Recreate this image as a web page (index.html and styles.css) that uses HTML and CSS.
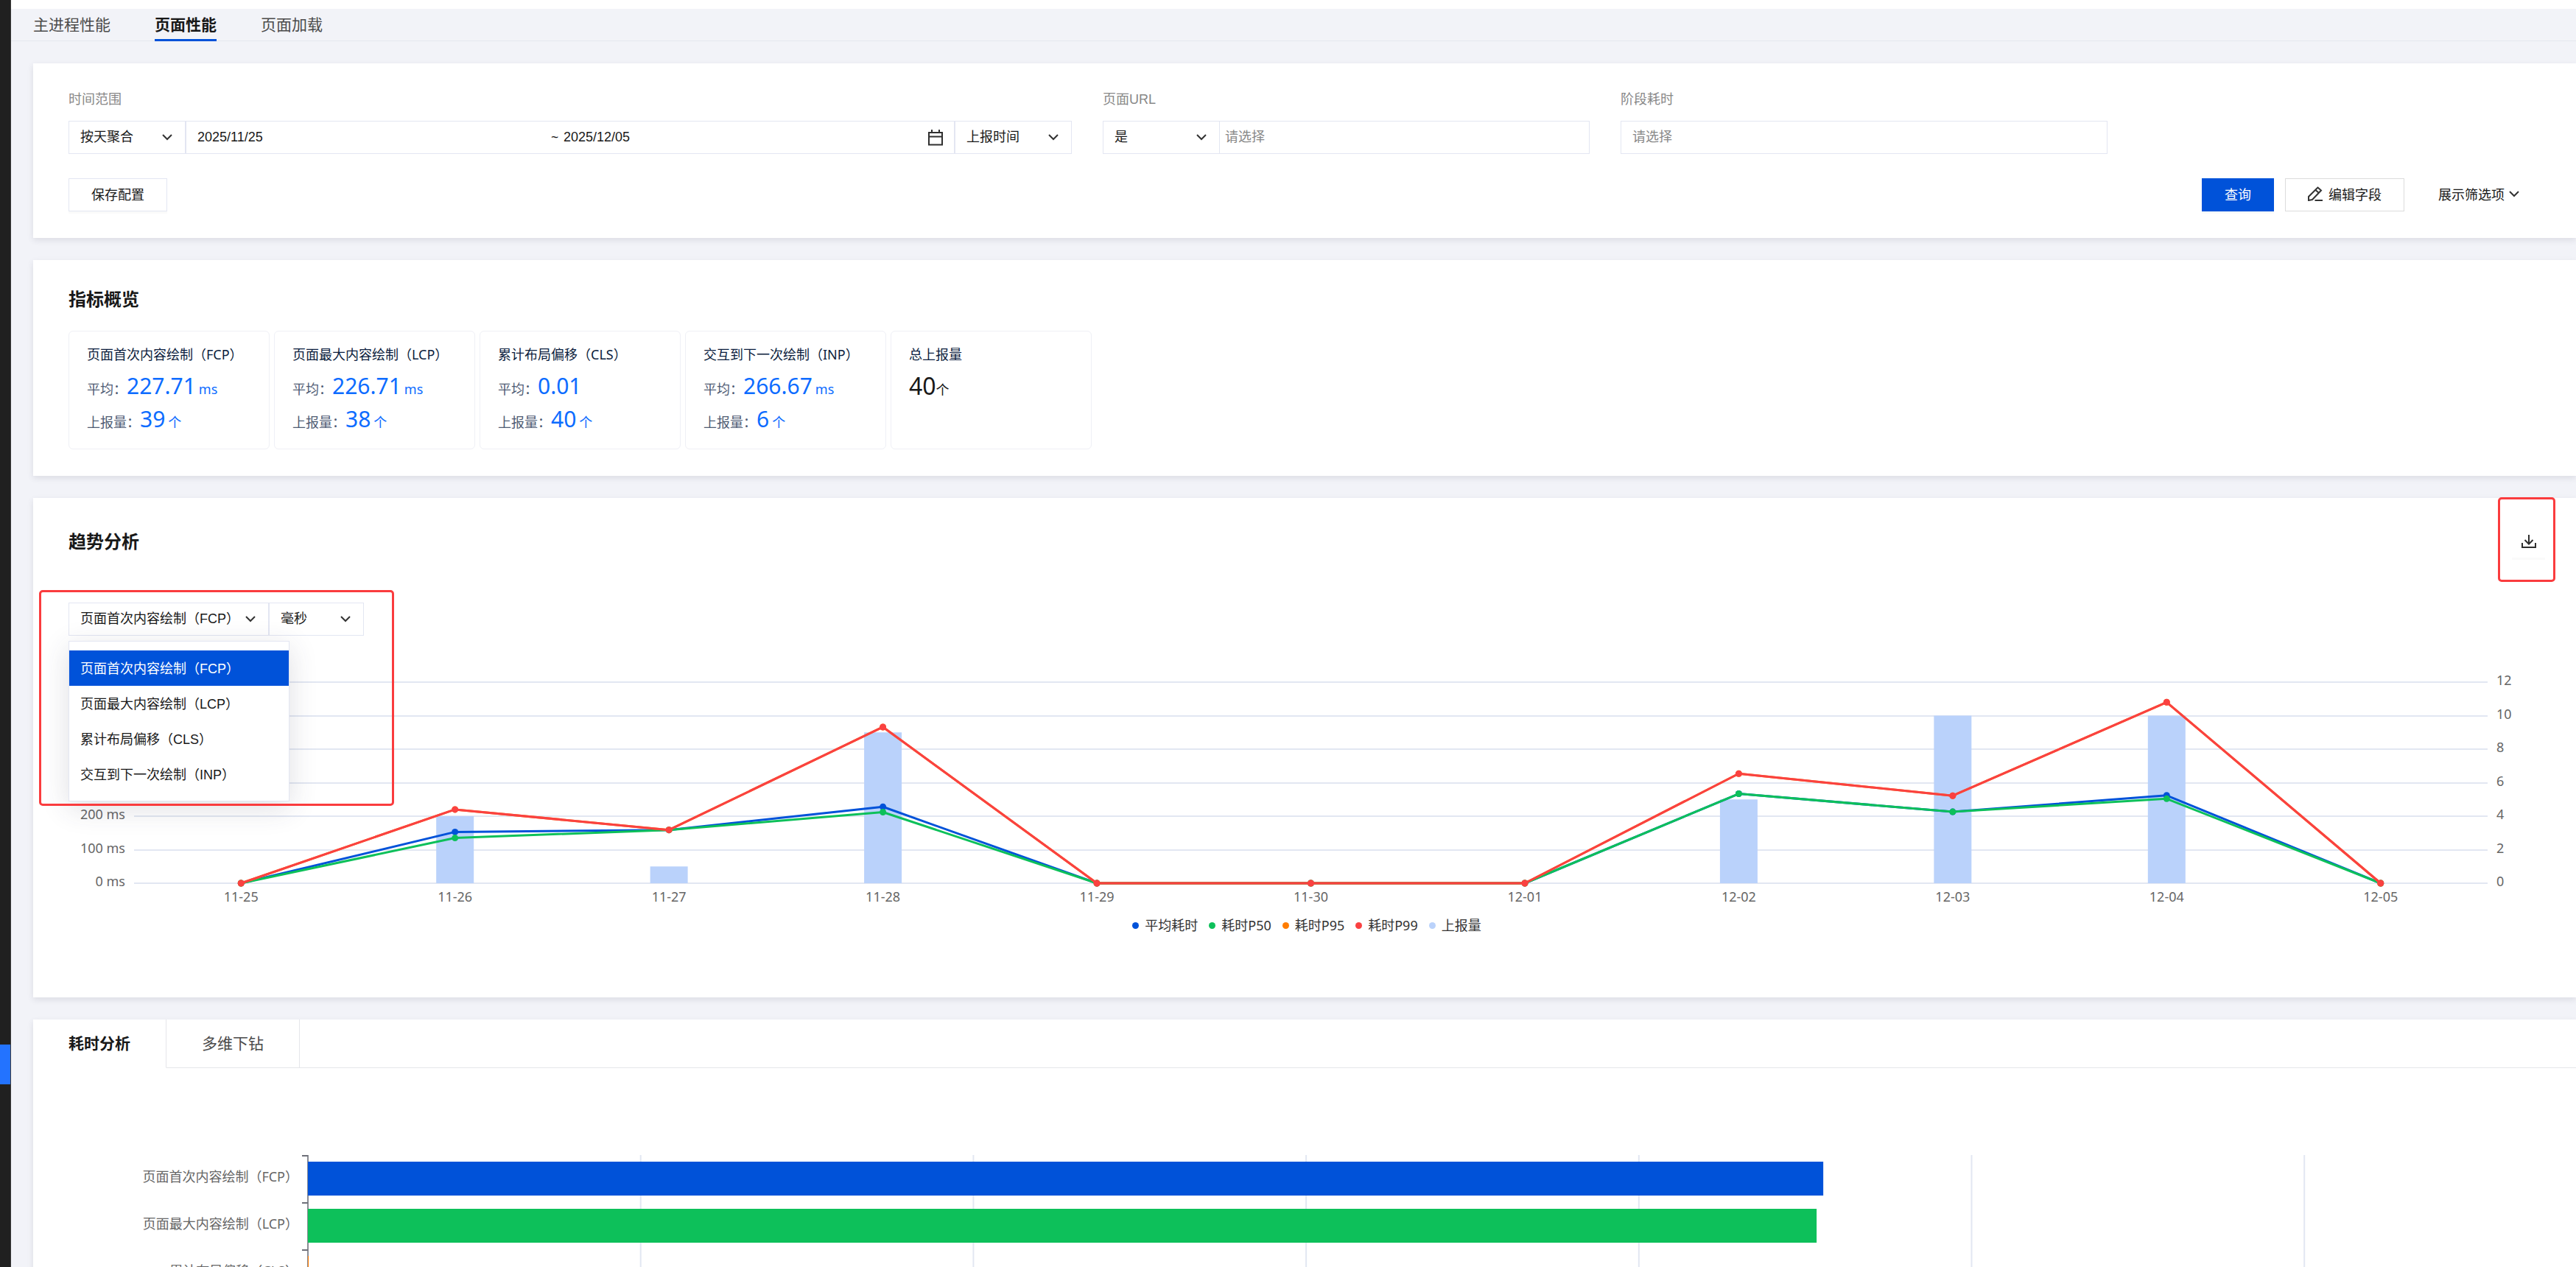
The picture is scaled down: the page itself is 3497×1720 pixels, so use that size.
FILE: index.html
```html
<!DOCTYPE html>
<html lang="zh-CN">
<head>
    <meta charset="UTF-8">
    <title>页面性能</title>
    <link rel="stylesheet" href="styles.css">
</head>
<body>
    <div class="app">
        <aside class="sidebar">
            <div class="sidebar-active"></div>
        </aside>

        <main class="main">
            <div class="topbar"></div>
            <nav class="nav">
                <a href="#process">主进程性能</a>
                <a href="#page" class="active">页面性能</a>
                <a href="#load">页面加载</a>
            </nav>

            <!-- 筛选 -->
            <section class="card">
                <div class="filters">
                    <div class="field">
                        <label for="aggregate">时间范围</label>
                        <div class="group">
                            <div class="select-box">
                                <select id="aggregate"><option>按天聚合</option></select>
                                <svg class="chevron" viewBox="0 0 14 9"><path d="M1 1l6 6 6-6"/></svg>
                            </div>
                            <div class="date-box">
                                <input type="text" value="2025/11/25" aria-label="开始日期">
                                <span>~</span>
                                <input type="text" value="2025/12/05" aria-label="结束日期">
                                <svg class="calendar" viewBox="0 0 20 22"><path d="M1 4h18v16.500H1zM1 9.500h18M5 0v4M15 0v4"/></svg>
                            </div>
                            <div class="select-box">
                                <select aria-label="时间类型"><option>上报时间</option></select>
                                <svg class="chevron" viewBox="0 0 14 9"><path d="M1 1l6 6 6-6"/></svg>
                            </div>
                        </div>
                    </div>
                    <div class="field">
                        <label for="url">页面URL</label>
                        <div class="group">
                            <div class="select-box">
                                <select aria-label="匹配方式"><option>是</option></select>
                                <svg class="chevron" viewBox="0 0 14 9"><path d="M1 1l6 6 6-6"/></svg>
                            </div>
                            <input type="text" id="url" class="text-input joined" placeholder="请选择">
                        </div>
                    </div>
                    <div class="field">
                        <label for="stage">阶段耗时</label>
                        <div class="group">
                            <input type="text" id="stage" class="text-input" placeholder="请选择">
                        </div>
                    </div>
                </div>
                <div class="actions">
                    <button class="btn save">保存配置</button>
                    <button class="btn primary">查询</button>
                    <button class="btn edit">
                        <svg class="pen" viewBox="0 0 20 20"><path d="M1 19v-5L13.500 1.500l4.500 4L6 18zM10.500 5l4.500 4M9.500 19H20"/></svg>
                        编辑字段
                    </button>
                    <button class="btn link">
                        展示筛选项
                        <svg class="chevron" viewBox="0 0 14 9"><path d="M1 1l6 6 6-6"/></svg>
                    </button>
                </div>
            </section>

            <!-- 指标概览 -->
            <section class="card">
                <h2>指标概览</h2>
                <div class="metrics">
                    <div class="metric">
                        <h3>页面首次内容绘制（FCP）</h3>
                        <p>平均：<b>227.71</b><i>ms</i></p>
                        <p>上报量：<b>39</b><i>个</i></p>
                    </div>
                    <div class="metric">
                        <h3>页面最大内容绘制（LCP）</h3>
                        <p>平均：<b>226.71</b><i>ms</i></p>
                        <p>上报量：<b>38</b><i>个</i></p>
                    </div>
                    <div class="metric">
                        <h3>累计布局偏移（CLS）</h3>
                        <p>平均：<b>0.01</b></p>
                        <p>上报量：<b>40</b><i>个</i></p>
                    </div>
                    <div class="metric">
                        <h3>交互到下一次绘制（INP）</h3>
                        <p>平均：<b>266.67</b><i>ms</i></p>
                        <p>上报量：<b>6</b><i>个</i></p>
                    </div>
                    <div class="metric total">
                        <h3>总上报量</h3>
                        <p><b>40</b><i>个</i></p>
                    </div>
                </div>
            </section>

            <!-- 趋势分析 -->
            <section class="card trend">
                <div class="card-head">
                    <h2>趋势分析</h2>
                    <button class="download" aria-label="下载">
                        <svg viewBox="0 0 20 18"><path d="M10 0v12M4.500 7l5.500 5.500L15.500 7M1 11v6h18v-6"/></svg>
                    </button>
                </div>
                <div class="trend-tools">
                    <div class="select-box metric-select">
                        <select aria-label="指标"><option>页面首次内容绘制（FCP）</option></select>
                        <svg class="chevron" viewBox="0 0 14 9"><path d="M1 1l6 6 6-6"/></svg>
                    </div>
                    <div class="select-box unit-select">
                        <select aria-label="单位"><option>毫秒</option></select>
                        <svg class="chevron" viewBox="0 0 14 9"><path d="M1 1l6 6 6-6"/></svg>
                    </div>
                    <ul class="menu">
                        <li><button class="selected">页面首次内容绘制（FCP）</button></li>
                        <li><button>页面最大内容绘制（LCP）</button></li>
                        <li><button>累计布局偏移（CLS）</button></li>
                        <li><button>交互到下一次绘制（INP）</button></li>
                    </ul>
                </div>
                <svg id="trendChart" class="trend-chart"></svg>
                <div class="legend">
                    <span class="avg">平均耗时</span>
                    <span class="p50">耗时P50</span>
                    <span class="p95">耗时P95</span>
                    <span class="p99">耗时P99</span>
                    <span class="count">上报量</span>
                </div>
                <div class="mark mark-select"></div>
                <div class="mark mark-download"></div>
            </section>

            <!-- 耗时分析 -->
            <section class="card analysis">
                <div class="tabs">
                    <button class="tab active">耗时分析</button>
                    <button class="tab">多维下钻</button>
                </div>
                <svg id="costChart" class="cost-chart"></svg>
            </section>
        </main>
    </div>

    <script src="charts.js"></script>
</body>
</html>
```

FILE: styles.css
```css
* {
    box-sizing: border-box;
}

body {
    margin: 0;
    font-family: "Noto Sans", "Noto Sans CJK SC", sans-serif;
    font-size: 18px;
    line-height: 27px;
    color: #181818;
    background: #f2f3f8;
    overflow: hidden;
}

h2, h3, p, ul {
    margin: 0;
    padding: 0;
}

button, input, select {
    font-family: "Liberation Sans", "Noto Sans CJK SC", sans-serif;
    font-size: 18px;
    color: #181818;
}

button {
    cursor: pointer;
}

svg {
    display: block;
    fill: none;
}

.app {
    display: flex;
    height: 100vh;
}

.sidebar {
    flex: none;
    width: 15px;
    padding-top: 1418px;
    background: #202020;
    border-right: 1px solid #3a3a3a;
}

.sidebar-active {
    height: 54px;
    background: #2373ff;
}

.main {
    flex: 1;
    min-width: 0;
    overflow: hidden;
}

.topbar {
    height: 12px;
    background: #fff;
}

.nav {
    display: flex;
    gap: 60px;
    height: 44px;
    padding-left: 30px;
    margin-bottom: 30px;
    border-bottom: 1px solid #e5e8ef;
}

.nav a {
    height: 44px;
    line-height: 42px;
    font-size: 21px;
    color: #4b4b4b;
    text-decoration: none;
}

.nav a.active {
    font-weight: bold;
    color: #181818;
    border-bottom: 3px solid #0052d9;
}

.card {
    position: relative;
    margin: 0 0 30px 30px;
    padding: 36px 42px 36px 48px;
    background: #fff;
    box-shadow: 0 3px 8px rgba(54, 58, 80, 0.12);
}

.card h2 {
    font-size: 24px;
    line-height: 33px;
}

/* 筛选 */
.filters {
    display: grid;
    grid-template-columns: 1362fr 661fr 661fr 552fr;
    gap: 42px;
    margin-bottom: 33px;
}

.field label {
    display: block;
    margin-bottom: 15px;
    font-family: "Liberation Sans", "Noto Sans CJK SC", sans-serif;
    color: #888;
}

.group {
    display: flex;
    height: 45px;
}

.select-box {
    position: relative;
    flex: none;
    width: 159px;
    height: 45px;
}

.select-box select {
    appearance: none;
    width: 100%;
    height: 100%;
    padding: 0 32px 2px 15px;
    border: 1px solid #e3e6f2;
    border-radius: 0;
    background: #fff;
}

.chevron {
    width: 14px;
    height: 9px;
    stroke: #333;
    stroke-width: 2;
}

.select-box .chevron {
    position: absolute;
    right: 18px;
    top: 18px;
    pointer-events: none;
}

.date-box {
    flex: 1;
    display: flex;
    align-items: center;
    padding: 0 15px;
    border: 1px solid #e3e6f2;
}

.date-box input {
    flex: 1;
    min-width: 0;
    padding: 0;
    border: none;
}

.date-box span {
    width: 17px;
}

.calendar {
    width: 20px;
    height: 22px;
    margin-left: 15px;
    stroke: #2f2f2f;
    stroke-width: 2;
}

.text-input {
    flex: 1;
    min-width: 0;
    padding: 0 15px;
    border: 1px solid #e3e6f2;
}

.text-input.joined {
    padding-left: 7px;
    border-left: none;
}

.text-input::placeholder {
    color: #888;
}

.actions {
    display: flex;
    gap: 15px;
}

.btn {
    display: flex;
    align-items: center;
    height: 45px;
    padding: 0 30px 3px;
    border: 1px solid #e3e6f2;
    background: #fff;
    box-shadow: 0 3px 0 rgba(0, 0, 0, 0.02);
}

.btn.save {
    margin-right: auto;
}

.btn.primary {
    color: #fff;
    background: #0052d9;
    border-color: #0052d9;
}

.btn.edit {
    gap: 8px;
    border-color: #dcdcdc;
    box-shadow: none;
}

.btn.link {
    gap: 6px;
    padding-right: 34px;
    border-color: transparent;
    box-shadow: none;
}

.pen {
    width: 20px;
    height: 20px;
    stroke: #333;
    stroke-width: 2;
}

/* 指标概览 */
.metrics {
    display: flex;
    gap: 6px;
    margin-top: 27px;
}

.metric {
    width: 273px;
    height: 161px;
    padding: 18px 24px;
    border: 1px solid #eff0f6;
    border-radius: 6px;
}

.metric h3 {
    margin-bottom: 6px;
    font-size: 18px;
    font-weight: normal;
    line-height: 27px;
    color: #0b1d3d;
}

.metric p {
    height: 45px;
    line-height: 45px;
    color: #4e5b73;
}

.metric b {
    font-size: 30px;
    font-weight: normal;
    color: #0d6cff;
}

.metric i {
    margin-left: 4px;
    font-style: normal;
    color: #0d6cff;
}

.metric.total b,
.metric.total i {
    margin: 0;
    color: #181818;
}

.metric.total b {
    font-size: 32px;
}

/* 趋势分析 */
.card-head {
    display: flex;
    align-items: center;
    justify-content: space-between;
    height: 45px;
    margin-bottom: 61px;
}

.download {
    display: flex;
    align-items: center;
    justify-content: center;
    width: 45px;
    height: 45px;
    padding: 0;
    border: none;
    background: #fff;
    box-shadow: 0 3px 0 rgba(0, 0, 0, 0.02);
}

.download svg {
    width: 20px;
    height: 18px;
    stroke: #2f2f2f;
    stroke-width: 2;
}

.trend-tools {
    position: relative;
    display: flex;
}

.metric-select {
    width: 272px;
}

.unit-select {
    width: 129px;
}

.menu {
    position: absolute;
    z-index: 2;
    top: 52px;
    left: 0;
    width: 300px;
    padding: 12px 0;
    list-style: none;
    border: 1px solid #e3e6f2;
    background: #fff;
    box-shadow: 0 9px 36px rgba(54, 58, 80, 0.16);
}

.menu button {
    display: block;
    width: 100%;
    height: 48px;
    padding: 0 15px 3px;
    text-align: left;
    border: none;
    background: none;
}

.menu .selected {
    color: #fff;
    background: #0052d9;
}

.trend-chart {
    width: 100%;
    height: 380px;
}

.trend-chart text,
.cost-chart text {
    font-size: 18px;
    fill: #666;
}

.legend {
    display: flex;
    justify-content: center;
    gap: 15px;
    margin-bottom: 48px;
    color: #333;
}

.legend span {
    display: flex;
    align-items: center;
    gap: 8px;
}

.legend span::before {
    content: "";
    width: 9px;
    height: 9px;
    border-radius: 50%;
}

.legend .avg::before { background: #0052d9; }
.legend .p50::before { background: #0dc05a; }
.legend .p95::before { background: #ff7d00; }
.legend .p99::before { background: #fa4141; }
.legend .count::before { background: #bad2fb; }

.mark {
    position: absolute;
    z-index: 3;
    border: 3px solid #fa3c3e;
    border-radius: 5px;
    pointer-events: none;
}

.mark-select {
    top: 125px;
    left: 8px;
    width: 482px;
    height: 293px;
}

.mark-download {
    top: -1px;
    right: 28px;
    width: 78px;
    height: 115px;
}

/* 耗时分析 */
.analysis {
    padding: 0;
}

.tabs {
    display: flex;
    height: 66px;
}

.tabs::after {
    content: "";
    flex: 1;
    border-bottom: 1px solid #e5e6ea;
}

.tab {
    padding: 0 48px 3px;
    font-size: 21px;
    color: #4b4b4b;
    border: none;
    border-right: 1px solid #e5e6ea;
    border-bottom: 1px solid #e5e6ea;
    background: #fff;
}

.tab.active {
    font-weight: bold;
    color: #181818;
    border-bottom-color: #fff;
}

.cost-chart {
    width: 100%;
    height: 420px;
}
```

FILE: charts.js
```js
const NS = 'http://www.w3.org/2000/svg';

function add(svg, tag, attrs, text) {
    const el = document.createElementNS(NS, tag);
    for (const key in attrs) {
        el.setAttribute(key, attrs[key]);
    }
    if (text !== undefined) {
        el.textContent = text;
    }
    svg.appendChild(el);
}

function drawTrend() {
    const svg = document.getElementById('trendChart');
    svg.innerHTML = '';
    const days = ['11-25', '11-26', '11-27', '11-28', '11-29', '11-30', '12-01', '12-02', '12-03', '12-04', '12-05'];
    const counts = [0, 4, 1, 9, 0, 0, 0, 5, 10, 10, 0];
    const series = [
        { color: '#0052d9', data: [0, 153, 159, 228, 0, 0, 0, 267, 213, 262, 0] },
        { color: '#0dc05a', data: [0, 135, 159, 212, 0, 0, 0, 267, 213, 252, 0] },
        { color: '#ff7d00', data: [0, 220, 159, 466, 0, 0, 0, 327, 261, 540, 0] },
        { color: '#fa4141', data: [0, 220, 159, 466, 0, 0, 0, 327, 261, 540, 0] }
    ];
    const left = 89;
    const right = svg.clientWidth - 78;
    const top = 63;
    const bottom = 336;
    const band = (right - left) / days.length;
    const x = i => left + band * (i + 0.5);
    const y = v => bottom - (bottom - top) * v / 600;

    // 网格线和左右坐标
    for (let i = 0; i <= 6; i++) {
        const ly = Math.round(y(i * 100));
        add(svg, 'line', { x1: left, x2: right, y1: ly, y2: ly, stroke: '#e2e7f2', 'stroke-width': 2 });
        // 200 ms 以上的刻度在下拉菜单后面，不画
        if (i <= 2) {
            add(svg, 'text', { x: left - 12, y: ly + 4, 'text-anchor': 'end' }, i * 100 + ' ms');
        }
        add(svg, 'text', { x: right + 12, y: ly + 4 }, i * 2);
    }

    days.forEach((day, i) => {
        add(svg, 'text', { x: x(i), y: bottom + 25, 'text-anchor': 'middle' }, day);
        if (counts[i]) {
            const by = y(counts[i] * 50);
            add(svg, 'rect', { x: x(i) - 25.5, y: by, width: 51, height: bottom - by, fill: '#bad2fb' });
        }
    });

    series.forEach(s => {
        const points = s.data.map((v, i) => x(i) + ',' + y(v)).join(' ');
        add(svg, 'polyline', { points: points, stroke: s.color, 'stroke-width': 3, 'stroke-linejoin': 'bevel' });
        s.data.forEach((v, i) => {
            add(svg, 'circle', { cx: x(i), cy: y(v), r: 4.5, fill: s.color });
        });
    });
}

function drawCost() {
    const svg = document.getElementById('costChart');
    svg.innerHTML = '';
    const rows = [
        { name: '页面首次内容绘制（FCP）', value: 227.71, color: '#0052d9' },
        { name: '页面最大内容绘制（LCP）', value: 226.71, color: '#0dc05a' },
        { name: '累计布局偏移（CLS）', value: 0.01, color: '#ff7d00' },
        { name: '交互到下一次绘制（INP）', value: 266.67, color: '#fa4141' }
    ];
    const left = 373;
    const step = (svg.clientWidth - left - 30) / 6.75;
    const top = 118;
    const rowHeight = 64;
    const bottom = top + rowHeight * rows.length;

    for (let i = 1; i <= 6; i++) {
        add(svg, 'line', { x1: left + step * i, x2: left + step * i, y1: top, y2: bottom, stroke: '#e2e7f2', 'stroke-width': 2 });
    }
    add(svg, 'line', { x1: left, x2: left, y1: top, y2: bottom, stroke: '#8a8c94', 'stroke-width': 2 });

    rows.forEach((row, i) => {
        const ry = top + rowHeight * i;
        add(svg, 'line', { x1: left - 8, x2: left, y1: ry + 1, y2: ry + 1, stroke: '#6e7079', 'stroke-width': 2 });
        add(svg, 'rect', { x: left, y: ry + 9, width: Math.max(1, row.value * step / 50), height: 46, fill: row.color });
        add(svg, 'text', { x: left - 13, y: ry + 36, 'text-anchor': 'end' }, row.name);
    });
}

function draw() {
    drawTrend();
    drawCost();
}

draw();
window.addEventListener('resize', draw);
```
